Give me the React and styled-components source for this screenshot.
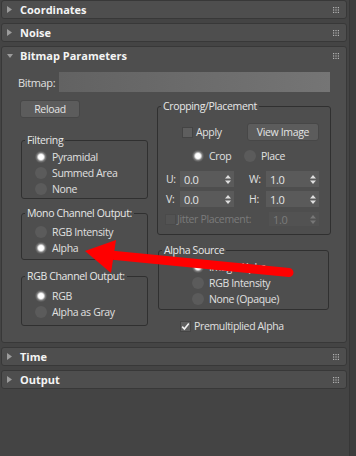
import React from "react";
import styled, { createGlobalStyle } from "styled-components";

const GlobalStyle = createGlobalStyle`
  body {
    margin: 0;
    background: #444444;
    font-family: "Open Sans", "Noto Sans", sans-serif;
  }
`;

const Page = styled.div`
  position: relative;
  display: flex;
  width: 356px;
  height: 456px;
  background: #444444;
  overflow: hidden;
`;

const Stack = styled.div`
  flex: 1;
  display: flex;
  flex-direction: column;
  gap: 4px;
  padding: 0 2px 0 1px;
`;

const ScrollStrip = styled.div`
  width: 6px;
  background: #3d3d3d;
  border-left: 1px solid #373737;
`;

const Rollout = styled.div`
  border: 1px solid #383838;
  border-radius: 3px;
  background: #4e4e4e;
`;

const RolloutHeader = styled.div`
  display: flex;
  align-items: center;
  height: 17px;
  color: #f4f4f4;
  font-size: 11px;
  font-weight: 700;
`;

const Twisty = styled.span`
  display: flex;
  align-items: center;
  width: 13px;
  padding-left: 5px;
`;

const Grip = styled.svg`
  margin-left: auto;
  margin-right: 7px;
`;

const Body = styled.div`
  padding: 8px 0 9px 16px;
  color: #e0e0e0;
  font-size: 10.5px;
  letter-spacing: -0.35px;
`;

const BitmapRow = styled.div`
  display: flex;
  align-items: center;
  height: 20px;
`;

const FieldLabel = styled.span`
  width: 41px;
  font-size: 11px;
`;

const PathField = styled.div`
  width: 271px;
  height: 20px;
  background: linear-gradient(to right, #626262, #757575);
`;

const Columns = styled.div`
  display: flex;
  gap: 9px;
  margin: 7px 0 0 2px;
`;

const Column = styled.div`
  display: flex;
  flex-direction: column;
  align-items: flex-start;
  width: ${(p) => p.$w}px;
`;

const Button = styled.div`
  display: flex;
  align-items: center;
  justify-content: center;
  box-sizing: border-box;
  width: ${(p) => p.$w}px;
  height: 18px;
  margin-top: ${(p) => p.$mt || 0}px;
  margin-left: ${(p) => (p.$right ? "auto" : "0")};
  background: #5c5c5c;
  border: 1px solid #474747;
  border-radius: 3px;
  color: #e4e4e4;
  font-size: 10.5px;
`;

const Group = styled.fieldset`
  box-sizing: border-box;
  width: ${(p) => p.$w}px;
  margin: ${(p) => p.$mt}px 0 0 ${(p) => p.$ml || 0}px;
  padding: ${(p) => p.$pt}px ${(p) => p.$pr || 0}px ${(p) => p.$pb}px
    ${(p) => p.$pl || 0}px;
  border: 1px solid #303030;
  border-radius: 3px;
  min-width: 0;
`;

const Legend = styled.legend`
  margin-left: ${(p) => (p.$ml === undefined ? 3 : p.$ml)}px;
  padding: 0 2px;
  line-height: 14px;
  color: #e8e8e8;
  white-space: nowrap;
`;

const Option = styled.div`
  display: flex;
  align-items: center;
  gap: 5px;
  height: 16px;
  width: ${(p) => (p.$w ? `${p.$w}px` : "auto")};
  padding-left: ${(p) => p.$indent || 0}px;
`;

const RadioDot = styled.span`
  flex: none;
  width: 12px;
  height: 12px;
  border-radius: 50%;
  background: ${(p) =>
    p.$on
      ? "radial-gradient(circle, #ffffff 0 2.4px, #e0e0e0 3px, #7a7a7a 4.4px, #5b5b5b 5.6px)"
      : "#5b5b5b"};
`;

const Box = styled.span`
  flex: none;
  display: flex;
  align-items: center;
  justify-content: center;
  box-sizing: border-box;
  width: 11px;
  height: 11px;
  background: ${(p) => (p.$dim ? "#535353" : "#5e5e5e")};
  border: 1px solid ${(p) => (p.$dim ? "#4a4a4a" : "#444444")};
`;

const Row = styled.div`
  display: flex;
  align-items: center;
  height: ${(p) => p.$h || 16}px;
  margin-top: ${(p) => p.$mt || 0}px;
  margin-left: ${(p) => p.$ml || 0}px;
  gap: ${(p) => p.$gap || 0}px;
  color: ${(p) => (p.$dim ? "#7b7b7b" : "inherit")};
`;

const SpinLabel = styled.span`
  width: ${(p) => p.$w}px;
`;

const Spinner = styled.div`
  display: flex;
  align-items: center;
  justify-content: space-between;
  box-sizing: border-box;
  width: ${(p) => p.$w}px;
  height: ${(p) => p.$h || 16}px;
  margin-left: ${(p) => (p.$right ? "auto" : "0")};
  padding: 0 3px 0 4px;
  background: ${(p) => (p.$dim ? "#525252" : "#5a5a5a")};
  color: ${(p) => (p.$dim ? "#7b7b7b" : "#e6e6e6")};
  font-size: 11px;
`;

const Collapsed = ({ title }) => (
  <Rollout>
    <RolloutHeader>
      <Twisty>
        <svg width="5" height="7" viewBox="0 0 5 7">
          <path d="M0 0 L5 3.5 L0 7 Z" fill="#9c9c9c" />
        </svg>
      </Twisty>
      {title}
      <GripDots />
    </RolloutHeader>
  </Rollout>
);

const GripDots = () => (
  <Grip width="6" height="6" viewBox="0 0 6 6">
    {[0, 2.4, 4.8].map((y) =>
      [0, 2.4, 4.8].map((x) => (
        <rect key={`${x}-${y}`} x={x} y={y} width="1.2" height="1.2" fill="#b4b4b4" />
      ))
    )}
  </Grip>
);

const Radio = ({ on, label, indent, w }) => (
  <Option $indent={indent} $w={w}>
    <RadioDot $on={on} />
    {label}
  </Option>
);

const Arrows = ({ dim }) => (
  <svg width="6" height="9" viewBox="0 0 6 9">
    <path d="M0 3.5 L3 0 L6 3.5 Z M0 5.5 L6 5.5 L3 9 Z" fill={dim ? "#777" : "#dedede"} />
  </svg>
);

const Check = () => (
  <svg width="9" height="9" viewBox="0 0 9 9">
    <path d="M1.2 4.6 L3.4 7 L7.8 1.4" stroke="#f0f0f0" strokeWidth="1.6" fill="none" />
  </svg>
);

const Overlay = styled.svg`
  position: absolute;
  left: 0;
  top: 0;
  pointer-events: none;
`;

export default function App() {
  return (
    <Page>
      <GlobalStyle />
      <Stack>
        <Collapsed title="Coordinates" />
        <Collapsed title="Noise" />
        <Rollout>
          <RolloutHeader>
            <Twisty>
              <svg width="6" height="4" viewBox="0 0 6 4">
                <path d="M0 0 L6 0 L3 4 Z" fill="#9c9c9c" />
              </svg>
            </Twisty>
            Bitmap Parameters
            <GripDots />
          </RolloutHeader>
          <Body>
            <BitmapRow>
              <FieldLabel>Bitmap:</FieldLabel>
              <PathField />
            </BitmapRow>
            <Columns>
              <Column $w={128}>
                <Button $w={60} $mt={1}>
                  Reload
                </Button>
                <Group $w={127} $mt={15} $ml={1} $pt={2} $pb={1}>
                  <Legend>Filtering</Legend>
                  <Radio on indent={13} label="Pyramidal" />
                  <Radio indent={13} label="Summed Area" />
                  <Radio indent={13} label="None" />
                </Group>
                <Group $w={127} $mt={7} $ml={1} $pt={4} $pb={3}>
                  <Legend>Mono Channel Output:</Legend>
                  <Radio indent={13} label="RGB Intensity" />
                  <Radio on indent={13} label="Alpha" />
                </Group>
                <Group $w={127} $mt={9} $ml={1} $pt={5} $pb={5}>
                  <Legend>RGB Channel Output:</Legend>
                  <Radio on indent={13} label="RGB" />
                  <Radio indent={13} label="Alpha as Gray" />
                </Group>
              </Column>
              <Column $w={174}>
                <Group $w={174} $mt={0} $pt={10} $pb={8} $pl={8} $pr={11}>
                  <Legend $ml={-5}>Cropping/Placement</Legend>
                  <Row $h={18} $ml={16} $gap={3}>
                    <Box />
                    Apply
                    <Button $w={72} $right>
                      View Image
                    </Button>
                  </Row>
                  <Row $mt={7} $ml={26}>
                    <Radio on label="Crop" w={52} />
                    <Radio label="Place" />
                  </Row>
                  <Row $mt={7}>
                    <SpinLabel $w={14}>U:</SpinLabel>
                    <Spinner $w={54}>
                      0.0
                      <Arrows />
                    </Spinner>
                    <SpinLabel $w={15} />
                    <SpinLabel $w={17}>W:</SpinLabel>
                    <Spinner $w={53}>
                      1.0
                      <Arrows />
                    </Spinner>
                  </Row>
                  <Row $mt={4}>
                    <SpinLabel $w={14}>V:</SpinLabel>
                    <Spinner $w={54}>
                      0.0
                      <Arrows />
                    </Spinner>
                    <SpinLabel $w={15} />
                    <SpinLabel $w={17}>H:</SpinLabel>
                    <Spinner $w={53}>
                      1.0
                      <Arrows />
                    </Spinner>
                  </Row>
                  <Row $mt={5} $h={14} $ml={-1} $gap={1} $dim>
                    <Box $dim />
                    Jitter Placement:
                    <Spinner $w={50} $h={14} $right $dim>
                      1.0
                      <Arrows dim />
                    </Spinner>
                  </Row>
                </Group>
                <Group $w={171} $mt={8} $ml={1} $pt={2} $pb={2}>
                  <Legend>Alpha Source</Legend>
                  <Radio on indent={33} label="Image Alpha" />
                  <Radio indent={33} label="RGB Intensity" />
                  <Radio indent={33} label="None (Opaque)" />
                </Group>
                <Row $mt={9} $h={14} $ml={23} $gap={3}>
                  <Box>
                    <Check />
                  </Box>
                  Premultiplied Alpha
                </Row>
              </Column>
            </Columns>
          </Body>
        </Rollout>
        <Collapsed title="Time" />
        <Collapsed title="Output" />
      </Stack>
      <ScrollStrip />
      <Overlay width="356" height="456" viewBox="0 0 356 456">
        <line x1="110" y1="255" x2="289" y2="272.5" stroke="#ff0000" strokeWidth="9" strokeLinecap="round" />
        <polygon points="85,251 116,240 111,273" fill="#ff0000" />
      </Overlay>
    </Page>
  );
}
